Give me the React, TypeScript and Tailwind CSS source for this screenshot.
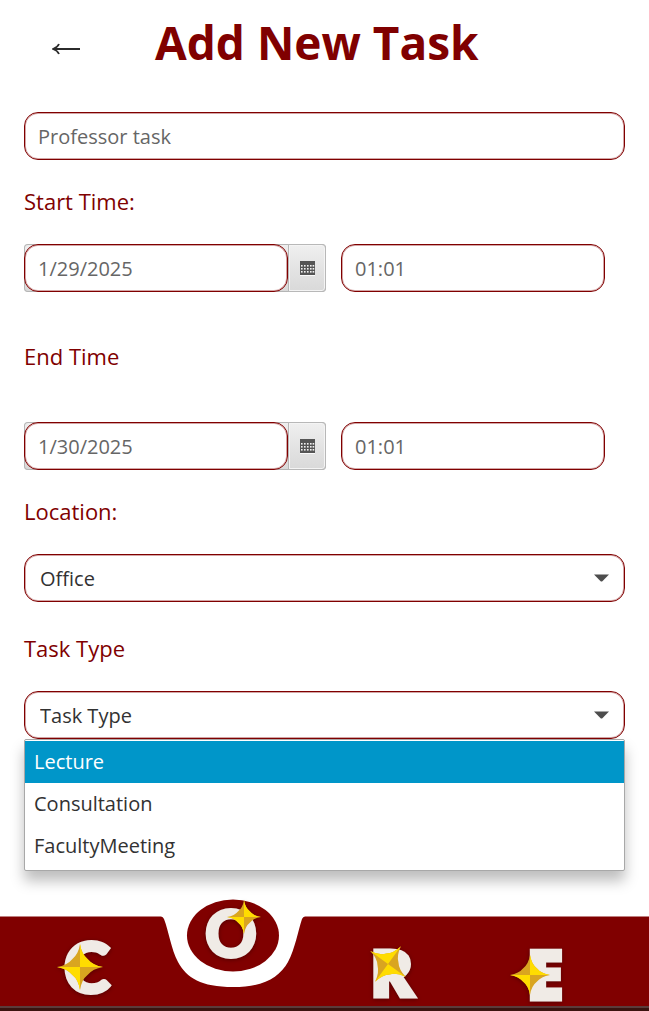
import { useState } from "react";

const outlineClass = "rounded-[14px] border border-[#800000] shadow-[inset_0_0_0_1px_rgba(128,0,0,0.35)] bg-white outline-none";
const fieldClass = `${outlineClass} h-12 w-full min-w-0 px-[13px] text-[20px] text-[#606060] placeholder:text-[#666666]`;
const labelClass = "block text-[22px] leading-[30px] text-[#800000]";

function CalendarIcon() {
  return (
    <svg width="15" height="15" viewBox="0 0 15 15" aria-hidden="true">
      <rect x="0" y="14" width="15" height="1" fill="#fafafa" />
      <rect x="0" y="0" width="15" height="14" fill="#555555" />
      {[4, 7, 10].map((y) =>
        [1, 4, 7, 10, 12.6].map((x) => (
          <rect key={`${x}-${y}`} x={x} y={y} width="1.6" height="1.6" fill="#f2f2f2" />
        )),
      )}
    </svg>
  );
}

function DateTimeRow({ id, name, date, time }: { id: string; name: string; date: string; time: string }) {
  return (
    <div className="grid grid-cols-[302fr_264fr] gap-[15px] pr-5">
      <div className="flex rounded-[4px] bg-linear-to-b from-[#efefef] to-[#d9d9d9] shadow-[inset_0_0_0_1px_#b5b5b5]">
        <input id={id} className={fieldClass} placeholder={date} />
        <button
          type="button"
          aria-label={`Choose ${name} date`}
          className="flex w-[38px] shrink-0 items-center justify-center rounded-r-[4px] border border-[#b8b8b8] bg-linear-to-b from-[#efefef] to-[#d9d9d9] shadow-[inset_0_0_0_1px_#f4f4f4]"
        >
          <CalendarIcon />
        </button>
      </div>
      <input aria-label={`${name} hour`} className={fieldClass} placeholder={time} />
    </div>
  );
}

function SelectBox({ id, options }: { id: string; options: string[] }) {
  return (
    <div className="grid items-center">
      <select
        id={id}
        className={`${outlineClass} col-start-1 row-start-1 h-12 w-full appearance-none px-[15px] pt-px text-[20px] text-[#323232]`}
      >
        {options.map((option) => (
          <option key={option}>{option}</option>
        ))}
      </select>
      <svg
        className="pointer-events-none col-start-1 row-start-1 mr-4 justify-self-end"
        width="15"
        height="8"
        viewBox="0 0 15 8"
        aria-hidden="true"
      >
        <path d="M0 0.5H15L8.4 7.2Q7.5 8 6.6 7.2Z" fill="#4d4d4d" />
      </svg>
    </div>
  );
}

function Star({ x, y, r, turn = 0 }: { x: number; y: number; r: number; turn?: number }) {
  return (
    <g transform={`translate(${x} ${y}) rotate(${turn}) scale(${r})`}>
      <path
        d="M0 -1Q.07 -.55 .34 -.34Q.55 -.08 1 0Q.55 .08 .34 .34Q.07 .55 0 1Q-.07 .55 -.34 .34Q-.55 .08 -1 0Q-.55 -.08 -.34 -.34Q-.07 -.55 0 -1Z"
        fill="#d9a520"
      />
      <path d="M0 -1Q.07 -.55 .34 -.34Q.55 -.08 1 0H0Z" fill="#ffdc00" />
      <path d="M0 1Q-.07 .55 -.34 .34Q-.55 .08 -1 0H0Z" fill="#ffdc00" />
    </g>
  );
}

const round = "font-['Lato'] font-black";
const straight = "font-['Open_Sans'] font-extrabold";

const tabs = [
  { letter: "C", font: round, box: "0 0 150 113", x: 87, y: 95, size: 71, star: { x: 80, y: 69, r: 23, turn: 0 } },
  { letter: "O", font: round, box: "150 0 160 113", x: 231, y: 59, size: 64, star: { x: 244, y: 19, r: 17, turn: 0 } },
  { letter: "R", font: straight, box: "310 0 160 113", x: 392, y: 99, size: 66, star: { x: 388, y: 66, r: 22, turn: -54 } },
  { letter: "E", font: straight, box: "470 0 179 113", x: 545, y: 102, size: 69, star: { x: 530, y: 77, r: 20, turn: 0 } },
];

function BottomNav() {
  return (
    <nav className="grid w-full" aria-label="Main">
      <svg className="col-start-1 row-start-1 block w-full" viewBox="0 0 649 113" aria-hidden="true">
        <path
          d="M0 18.5H161Q163 18.5 164 21C169 34 171 51 178 64C187 80 201 89 233 89C263 89 279 80 288 64C295 51 298 33 302 21Q303 18.5 305 18.5H649V108H0Z"
          fill="#800000"
        />
        <ellipse cx="233" cy="37.5" rx="46" ry="36" fill="#800000" />
        <rect y="108" width="649" height="2" fill="#5c3b3a" />
        <rect y="110" width="649" height="3" fill="#3a130f" />
      </svg>
      <div className="col-start-1 row-start-1 grid grid-cols-[150fr_160fr_160fr_179fr]">
        {tabs.map((tab) => (
          <button key={tab.letter} type="button" aria-label={tab.letter} className="block">
            <svg className="block w-full overflow-visible drop-shadow-[0_1px_2px_rgba(0,0,0,0.35)]" viewBox={tab.box}>
              <text
                x={tab.x}
                y={tab.y}
                fontSize={tab.size}
                textAnchor="middle"
                fill="#f0ebe6"
                stroke="#f0ebe6"
                strokeWidth="3"
                className={tab.font}
              >
                {tab.letter}
              </text>
              <Star {...tab.star} />
            </svg>
          </button>
        ))}
      </div>
    </nav>
  );
}

export default function App() {
  const [active, setActive] = useState("Lecture");
  return (
    <div className="flex min-h-screen flex-col bg-white font-['Open_Sans','Noto_Sans',sans-serif]">
      <header className="flex h-[84px] items-center gap-[75px] pl-[52px]">
        <button type="button" aria-label="Back" className="pt-[14px]">
          <svg width="28" height="14" viewBox="0 0 28 14" fill="none" stroke="#2b2b2b" strokeWidth="1.8" aria-hidden="true">
            <path d="M28 7H2M7 2Q5.5 5.5 1 7Q5.5 8.5 7 12" />
          </svg>
        </button>
        <h1 className="text-[46px] leading-[64px] font-bold text-[#800000]">Add New Task</h1>
      </header>

      <main className="flex-1 px-6 pt-7">
        <input aria-label="Task name" className={fieldClass} placeholder="Professor task" />

        <label htmlFor="start" className={`${labelClass} mt-[26px] mb-7`}>Start Time:</label>
        <DateTimeRow id="start" name="Start" date="1/29/2025" time="01:01" />

        <label htmlFor="end" className={`${labelClass} mt-[49px] mb-[51px]`}>End Time</label>
        <DateTimeRow id="end" name="End" date="1/30/2025" time="01:01" />

        <label htmlFor="location" className={`${labelClass} mt-[26px] mb-7`}>Location:</label>
        <SelectBox id="location" options={["Office"]} />

        <label htmlFor="type" className={`${labelClass} mt-[31px] mb-7`}>Task Type</label>
        <div className="relative mb-[159px]">
          <SelectBox id="type" options={["Task Type"]} />
          <ul
            role="listbox"
            aria-label="Task Type"
            className="absolute inset-x-0 top-full rounded-[2px] border border-[#a8a8a8] bg-white pt-px pb-[3px] text-[20px] leading-[42px] text-[#323232] shadow-[0_10px_14px_rgba(0,0,0,0.26)]"
          >
            {["Lecture", "Consultation", "FacultyMeeting"].map((option) => (
              <li
                key={option}
                role="option"
                aria-selected={option === active}
                onMouseEnter={() => setActive(option)}
                className={option === active ? "bg-[#0096c9] px-[9px] text-white" : "px-[9px]"}
              >
                {option}
              </li>
            ))}
          </ul>
        </div>
      </main>

      <BottomNav />
    </div>
  );
}
